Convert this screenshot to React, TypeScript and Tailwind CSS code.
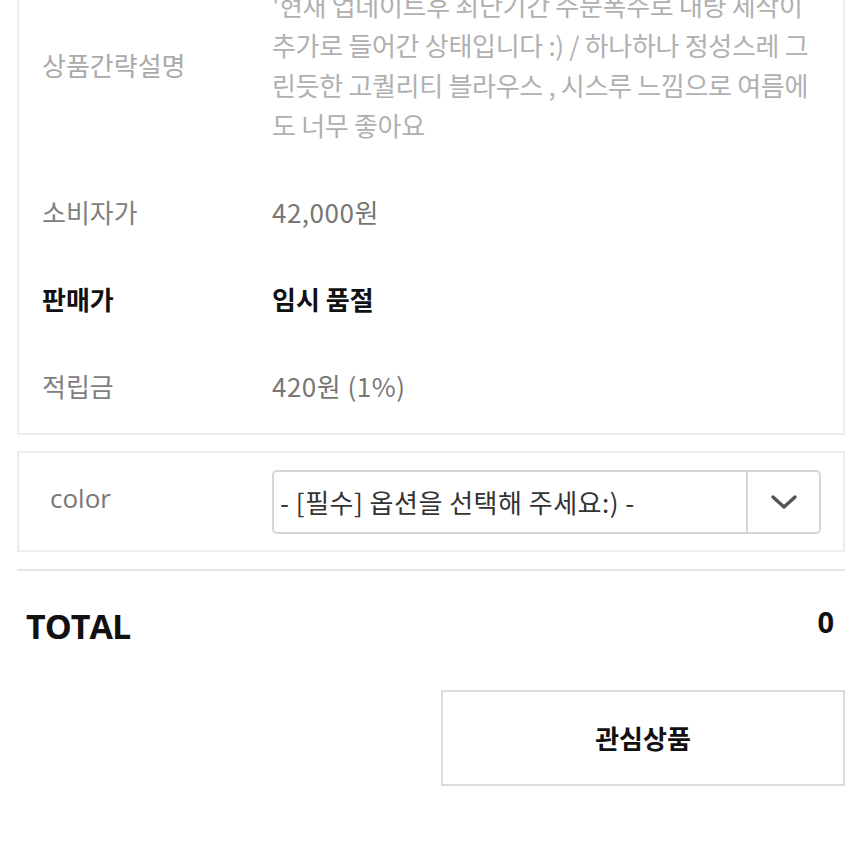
import React from 'react';

// 상품 상세 - 가격 정보 / 옵션 선택 / 합계
const descLines = [
  "'현재 업데이트후 최단기간 주문폭주로 대량 제작이",
  '추가로 들어간 상태입니다 :) / 하나하나 정성스레 그',
  '린듯한 고퀄리티 블라우스 , 시스루 느낌으로 여름에',
  '도 너무 좋아요',
];

const font = { fontFamily: '"Noto Sans CJK KR", "Open Sans", sans-serif' };

function InfoRow({ label, value, strong }: { label: string; value: string; strong?: boolean }) {
  return (
    <div className="flex items-center h-[40px] mt-[47px]">
      <div className={`w-[253px] pl-[23px] ${strong ? 'font-bold text-[#111]' : 'text-[#808080]'}`}>{label}</div>
      <div className={strong ? 'font-bold text-[#111]' : 'text-[#777] tracking-[0.5px]'}>{value}</div>
    </div>
  );
}

export default function App() {
  return (
    <div className="w-[856px] h-[856px] overflow-hidden bg-white text-[26px] leading-[40px]" style={font}>
      <div className="pl-[17px] pr-[11px] -mt-[35px]">
        {/* 상품 정보 박스 */}
        <div className="border-2 border-[#ececec] pt-[18px] pb-[27px]">
          <div className="flex items-center">
            <div className="w-[253px] pl-[23px] text-[#aaa]">상품간략설명</div>
            <div className="text-[#b0b0b0] tracking-[-0.3px]">
              {descLines.map((line) => (
                <div key={line} className="whitespace-nowrap">{line}</div>
              ))}
            </div>
          </div>
          <InfoRow label="소비자가" value="42,000원" />
          <InfoRow label="판매가" value="임시 품절" strong />
          <InfoRow label="적립금" value="420원 (1%)" />
        </div>

        {/* 옵션 선택 */}
        <div className="mt-[16px] border-2 border-[#ececec] h-[101px] flex items-center">
          <div className="w-[253px] pl-[31px] text-[#777] -mt-[8px]" style={{ fontFamily: '"Open Sans", sans-serif' }}>color</div>
          <div className="flex w-[549px] h-[64px] border-2 border-[#d6d6d6] rounded-[5px] bg-white">
            <div className="flex-1 flex items-center pl-[6px] text-[#333] tracking-[0.5px]">- [필수] 옵션을 선택해 주세요:) -</div>
            <div className="w-[73px] border-l-2 border-[#d6d6d6] flex items-center justify-center">
              <svg width="28" height="16" viewBox="0 0 28 16" fill="none">
                <path d="M3 3 L14 13 L25 3" stroke="#555" strokeWidth="3.5" strokeLinecap="round" strokeLinejoin="round" />
              </svg>
            </div>
          </div>
        </div>

        <div className="mt-[17px] h-[2px] bg-[#e6e6e6]" />

        {/* 합계 */}
        <div className="flex justify-between items-center mt-[35px] pl-[9px] pr-[11px]">
          <span className="text-[34px] font-bold text-[#111] tracking-[-1px]" style={{ fontFamily: '"Open Sans", sans-serif' }}>TOTAL</span>
          <span className="text-[29px] font-bold text-[#111] -mt-[8px]" style={{ fontFamily: '"Open Sans", sans-serif' }}>0</span>
        </div>

        <div className="flex justify-end mt-[44px]">
          <button className="w-[404px] h-[96px] border-2 border-[#dcdcdc] bg-white text-[26px] font-bold text-[#111]">
            관심상품
          </button>
        </div>
      </div>
    </div>
  );
}
